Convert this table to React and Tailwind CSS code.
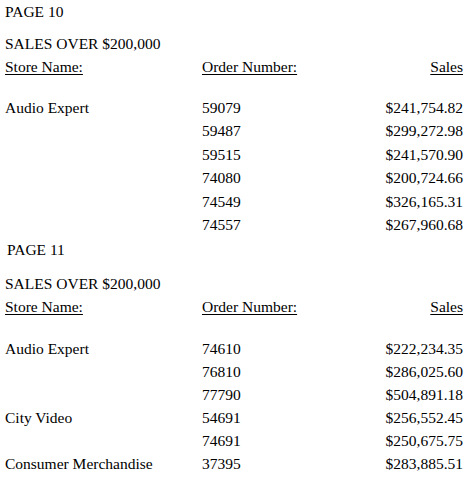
const PAGES = [
    {
        page: "PAGE 10",
        top: "",
        title: "h-[32px]",
        head: "h-[41px]",
        row: "h-[23.4px]",
        rows: [
            ["Audio Expert", "59079", "$241,754.82"],
            ["", "59487", "$299,272.98"],
            ["", "59515", "$241,570.90"],
            ["", "74080", "$200,724.66"],
            ["", "74549", "$326,165.31"],
            ["", "74557", "$267,960.68"],
        ],
    },
    {
        page: "PAGE 11",
        top: "mt-[2px] pl-[2px]",
        title: "h-[34px]",
        head: "h-[42px]",
        row: "h-[23px]",
        rows: [
            ["Audio Expert", "74610", "$222,234.35"],
            ["", "76810", "$286,025.60"],
            ["", "77790", "$504,891.18"],
            ["City Video", "54691", "$256,552.45"],
            ["", "74691", "$250,675.75"],
            ["Consumer Merchandise", "37395", "$283,885.51"],
        ],
    },
];

const ReportPage = ({ page, top, title, head, row, rows }) => (
    <section>
        <div className={title + " leading-[24px] " + top}>{page}</div>
        <div className="h-[23px] leading-[24px]">SALES OVER $200,000</div>
        <div className={"grid grid-cols-[197px_1fr_auto] leading-[24px] " + head}>
            <span className="underline underline-offset-2">Store Name:</span>
            <span className="underline underline-offset-2">Order Number:</span>
            <span className="underline underline-offset-2">Sales</span>
        </div>
        {rows.map((r, i) => (
            <div key={i} className={"grid grid-cols-[197px_1fr_auto] leading-[24px] " + row}>
                <span className="whitespace-nowrap">{r[0]}</span>
                <span>{r[1]}</span>
                <span className="text-right">{r[2]}</span>
            </div>
        ))}
    </section>
);

export default function App() {
    return (
        <div className="w-[474px] h-[485px] overflow-hidden bg-white pl-[5px] pr-[11px] text-[15.5px] text-black font-['Liberation_Serif','Times_New_Roman',serif]">
            {PAGES.map((p) => (
                <ReportPage key={p.page} {...p} />
            ))}
        </div>
    );
}
